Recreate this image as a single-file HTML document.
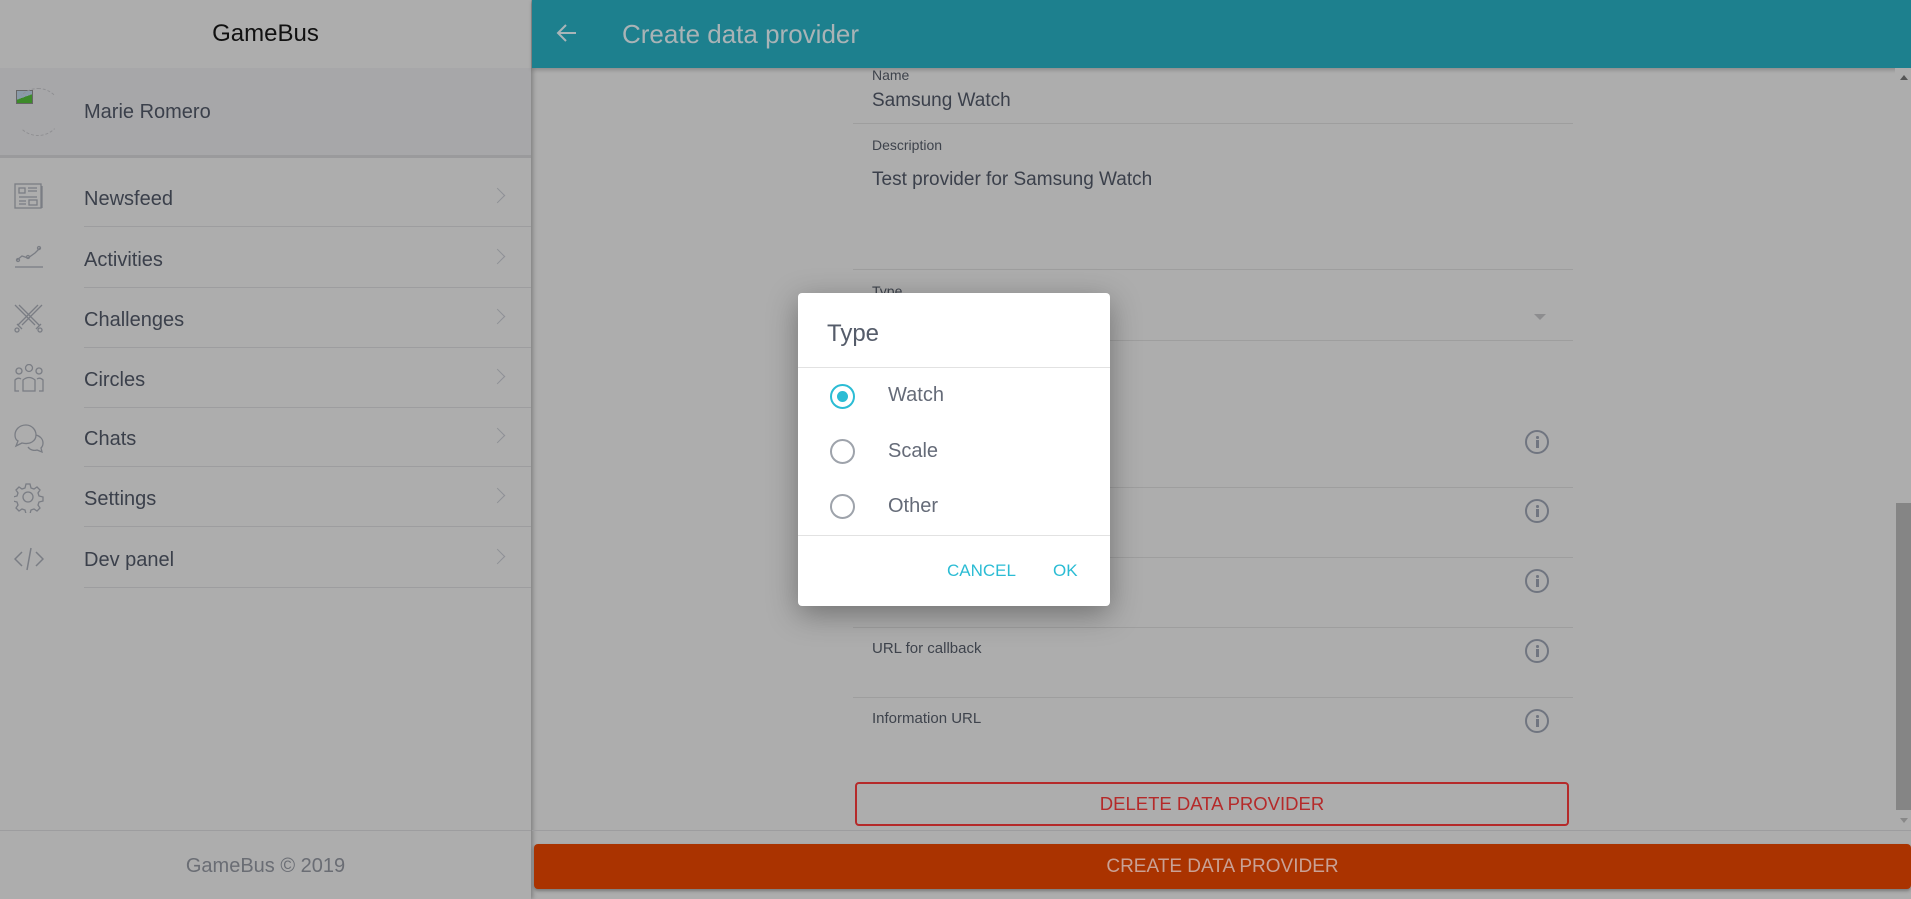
<!DOCTYPE html>
<html><head><meta charset="utf-8"><style>
*{margin:0;padding:0;box-sizing:border-box}
body{width:1911px;height:899px;overflow:hidden;background:#adadad;font-family:"Liberation Sans",sans-serif;position:relative}
.a{position:absolute}
.side{left:0;top:0;width:531px;height:899px;background:#adadad;box-shadow:2px 0 4px rgba(0,0,0,.25)}
.t{position:absolute;white-space:nowrap}
.item{position:absolute;left:0;width:531px;height:60px}
.item .lbl{position:absolute;left:84px;top:21px;font-size:20px;color:#3b404b}
.item .sep{position:absolute;left:84px;right:0;bottom:0;height:1px;background:#9d9d9f}
.item .chev{position:absolute;left:492px;top:23px;width:11px;height:11px;border-right:1.5px solid #8e9096;border-top:1.5px solid #8e9096;transform:rotate(45deg)}
.item svg{position:absolute;left:14px;top:16px}
.line{position:absolute;left:853px;width:720px;height:1px;background:#9e9e9e}
.lab{position:absolute;left:872px;font-size:15px;color:#3e434c}
.info{position:absolute;left:1525px;width:24px;height:24px;border:2px solid #707580;border-radius:50%}
.info:before{content:"";position:absolute;left:9px;top:4px;width:2.5px;height:2.5px;background:#707580;border-radius:50%}
.info:after{content:"";position:absolute;left:9px;top:8px;width:2.5px;height:8px;background:#707580}
.radio{position:absolute;left:830px;width:25px;height:25px;border:2px solid #9ea3ab;border-radius:50%}
.rl{position:absolute;left:888px;font-size:20px;color:#656b78}
</style></head><body>
<div class="a side">
 <div class="t" style="left:0;width:531px;text-align:center;top:20px;font-size:24px;color:#111">GameBus</div>
 <div class="a" style="left:0;top:68px;width:531px;height:90px;background:#a7a7a9;border-bottom:3px solid #9a9a9c"></div>
 <div class="a" style="left:16px;top:90px;width:17px;height:14px;background:linear-gradient(160deg,#8a9aa8 50%,#3d8a2a 50%);border:1px solid #666"></div>
 <div class="a" style="left:14px;top:88px;width:48px;height:48px;border:1px dashed #8f8f92;border-radius:50%;border-color:#8f8f92 transparent"></div>
 <div class="t" style="left:84px;top:101px;font-size:20px;color:#3b404b">Marie Romero</div>
 <div class="item" style="top:167px"><svg width="30" height="30" viewBox="0 0 30 30" fill="none" stroke="#7a7d84" stroke-width="1.3"><rect x="1" y="1" width="26" height="24"/><path d="M28 3v22M5 5h6v5H5zM14 5h9M14 8h9M5 14h18M5 18h7M5 21h7M15 17h8v5h-8z"/></svg><div class="lbl">Newsfeed</div><div class="chev"></div><div class="sep"></div></div>
 <div class="item" style="top:228px"><svg width="30" height="30" viewBox="0 0 30 30" fill="none" stroke="#7a7d84" stroke-width="1.3"><path d="M3 16l5-4 6 2 7-5 5-5M1 23h28" /><circle cx="4" cy="16" r="1.5"/><circle cx="14" cy="13" r="1.5"/><circle cx="25" cy="4" r="1.5"/></svg><div class="lbl">Activities</div><div class="chev"></div><div class="sep"></div></div>
 <div class="item" style="top:288px"><svg width="30" height="30" viewBox="0 0 30 30" fill="none" stroke="#7a7d84" stroke-width="1.3"><path d="M1 1l20 20M5 1L25 21M28 1L8 21M24 1L4 21M3 20l5 5M22 25l5-5"/><circle cx="3" cy="26" r="2"/><circle cx="26" cy="26" r="2"/></svg><div class="lbl">Challenges</div><div class="chev"></div><div class="sep"></div></div>
 <div class="item" style="top:348px"><svg width="30" height="30" viewBox="0 0 30 30" fill="none" stroke="#7a7d84" stroke-width="1.3"><circle cx="15" cy="4" r="3.5"/><circle cx="5" cy="7" r="3"/><circle cx="25" cy="7" r="3"/><path d="M9 27V16q6-5 12 0v11zM5 27H1V16q3-3 6-1M25 27h4V16q-3-3-6-1"/></svg><div class="lbl">Circles</div><div class="chev"></div><div class="sep"></div></div>
 <div class="item" style="top:407px"><svg width="30" height="30" viewBox="0 0 30 30" fill="none" stroke="#7a7d84" stroke-width="1.3"><path d="M12 2C5 2 1 7 1 12c0 3 1 5 3 6l-2 5 6-3c8 2 14-2 14-8 0-5-4-10-10-10zM22 12c4 1 7 4 7 8 0 2-1 4-2 5l1 4-5-2c-3 1-7 0-9-3"/></svg><div class="lbl">Chats</div><div class="chev"></div><div class="sep"></div></div>
 <div class="item" style="top:467px"><svg width="30" height="30" viewBox="0 0 30 30" fill="none" stroke="#7a7d84" stroke-width="1.3"><circle cx="14" cy="14" r="5"/><path d="M12 1h4l1 4 3 1 3-2 3 3-2 3 1 3 4 1v4l-4 1-1 3 2 3-3 3-3-2-3 1-1 4h-4l-1-4-3-1-3 2-3-3 2-3-1-3-4-1v-4l4-1 1-3-2-3 3-3 3 2 3-1z"/></svg><div class="lbl">Settings</div><div class="chev"></div><div class="sep"></div></div>
 <div class="item" style="top:528px"><svg width="30" height="30" viewBox="0 0 30 30" fill="none" stroke="#7a7d84" stroke-width="1.5"><path d="M8 8l-7 7 7 7M22 8l7 7-7 7M17 4l-4 22"/></svg><div class="lbl">Dev panel</div><div class="chev"></div><div class="sep"></div></div>
 <div class="a" style="left:0;top:830px;width:531px;height:1px;background:#9d9d9f"></div>
 <div class="t" style="left:0;width:531px;text-align:center;top:855px;font-size:20px;color:#6a6d74">GameBus © 2019</div>
</div>
<div class="a" style="left:532px;top:0;width:1379px;height:68px;background:#1d808e;box-shadow:0 2px 4px rgba(0,0,0,.2)"></div>
<svg class="a" style="left:556px;top:22px" width="22" height="22" viewBox="0 0 22 22" fill="none" stroke="#a9b5b8" stroke-width="2"><path d="M20 11H2M10 3l-8 8 8 8"/></svg>
<div class="t" style="left:622px;top:19px;font-size:26px;color:#a9b3b6">Create data provider</div>
<div class="lab" style="top:67px;font-size:14px">Name</div>
<div class="t" style="left:872px;top:90px;font-size:19px;color:#3b404b">Samsung Watch</div>
<div class="line" style="top:123px"></div>
<div class="lab" style="top:137px;font-size:14px">Description</div>
<div class="t" style="left:872px;top:169px;font-size:19px;color:#3b404b">Test provider for Samsung Watch</div>
<div class="line" style="top:269px"></div>
<div class="lab" style="top:283px;font-size:14px">Type</div>
<div class="a" style="left:1534px;top:314px;border-left:6px solid transparent;border-right:6px solid transparent;border-top:6px solid #8d8d8f"></div>
<div class="line" style="top:340px"></div>
<div class="info" style="top:430px"></div>
<div class="line" style="top:487px"></div>
<div class="info" style="top:499px"></div>
<div class="line" style="top:557px"></div>
<div class="info" style="top:569px"></div>
<div class="line" style="top:627px"></div>
<div class="info" style="top:639px"></div>
<div class="lab" style="top:640px">URL for callback</div>
<div class="line" style="top:697px"></div>
<div class="info" style="top:709px"></div>
<div class="lab" style="top:710px">Information URL</div>
<div class="a" style="left:855px;top:782px;width:714px;height:44px;border:2px solid #b52a2a;border-radius:4px;text-align:center;line-height:40px;font-size:18.5px;color:#b52a2a">DELETE DATA PROVIDER</div>
<div class="a" style="left:1895px;top:68px;width:16px;height:762px;background:#adadad"></div>
<div class="a" style="left:1896px;top:503px;width:15px;height:307px;background:#858585"></div>
<div class="a" style="left:1900px;top:75px;border-left:4px solid transparent;border-right:4px solid transparent;border-bottom:5px solid #555"></div>
<div class="a" style="left:1900px;top:818px;border-left:4px solid transparent;border-right:4px solid transparent;border-top:5px solid #888"></div>
<div class="a" style="left:532px;top:830px;width:1379px;height:1px;background:#9d9d9f"></div>
<div class="a" style="left:534px;top:844px;width:1377px;height:45px;background:#aa3300;border-radius:4px;box-shadow:0 2px 3px rgba(0,0,0,.3);text-align:center;line-height:45px;font-size:19px;color:#c9a195">CREATE DATA PROVIDER</div>

<div class="a" style="left:798px;top:293px;width:312px;height:313px;background:#fff;border-radius:4px;box-shadow:0 8px 30px rgba(0,0,0,.35)"></div>
<div class="t" style="left:827px;top:320px;font-size:24px;color:#555c6a">Type</div>
<div class="a" style="left:798px;top:367px;width:312px;height:1px;background:#e2e2e2"></div>
<div class="radio" style="top:384px;border-color:#2bbcd4"><div style="position:absolute;left:5px;top:5px;width:11px;height:11px;border-radius:50%;background:#2bbcd4"></div></div>
<div class="rl" style="top:384px">Watch</div>
<div class="radio" style="top:439px"></div>
<div class="rl" style="top:440px">Scale</div>
<div class="radio" style="top:494px"></div>
<div class="rl" style="top:495px">Other</div>
<div class="a" style="left:798px;top:535px;width:312px;height:1px;background:#e2e2e2"></div>
<div class="t" style="left:947px;top:561px;font-size:17px;color:#2bbcd4">CANCEL</div>
<div class="t" style="left:1053px;top:561px;font-size:17px;color:#2bbcd4">OK</div>
</body></html>
